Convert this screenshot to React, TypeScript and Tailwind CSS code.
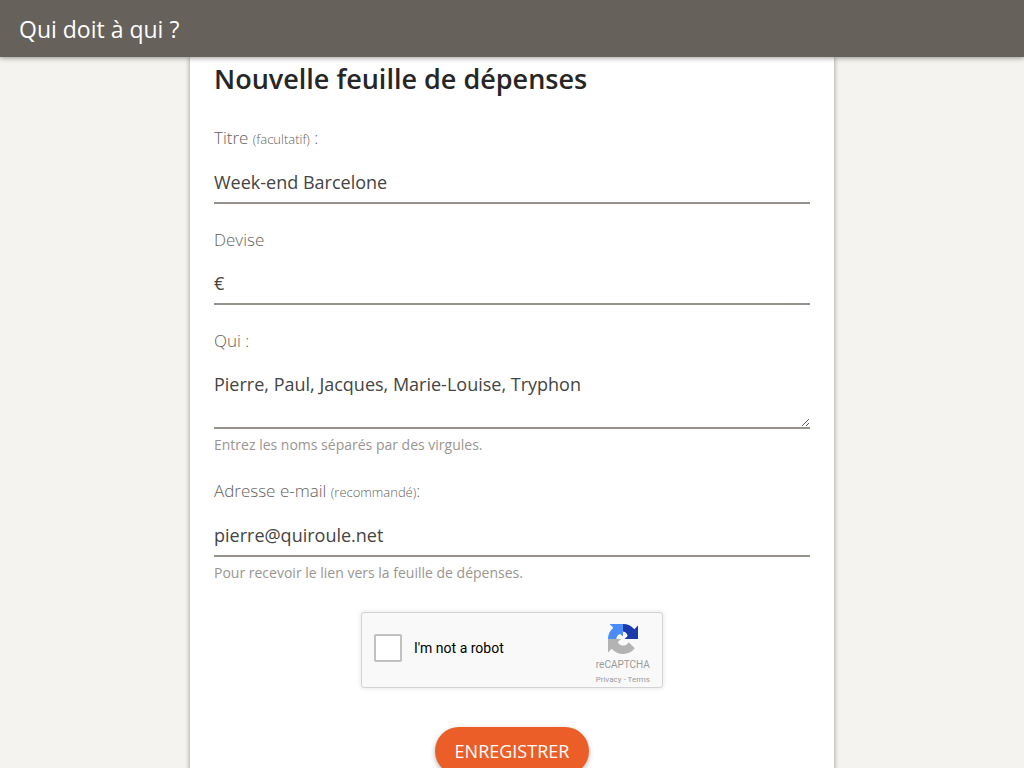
import { useState } from 'react'
import type { ReactNode } from 'react'

const inputCls =
  'block h-[43px] w-full border-b-2 border-[#98928d] bg-transparent text-[18px] text-[#444444] outline-none'

export default function App() {
  const [titre, setTitre] = useState('Week-end Barcelone')
  const [devise, setDevise] = useState('€')
  const [qui, setQui] = useState('Pierre, Paul, Jacques, Marie-Louise, Tryphon')
  const [email, setEmail] = useState('pierre@quiroule.net')

  return (
    <div className="min-h-screen bg-[#f4f3ef] font-['Open_Sans','Noto_Sans',sans-serif]">
      <header className="sticky top-0 z-10 flex h-[57px] items-center bg-[#66615b] px-[19px] shadow-[0_1px_5px_rgba(0,0,0,0.4)]">
        <span className="text-[23px] leading-8 text-white">Qui doit à qui ?</span>
      </header>

      <main className="mx-auto min-h-[calc(100vh-57px)] max-w-[644px] bg-white px-6 pb-4 shadow-[0_0_5px_rgba(0,0,0,0.4)]">
        <h1 className="pt-0.5 text-[27px] leading-10 font-semibold text-[#262626]">Nouvelle feuille de dépenses</h1>

        <form className="pt-[27px]" onSubmit={(e) => e.preventDefault()}>
          <div className="space-y-6">
            <Field id="titre" label={<>Titre <small className="text-[13px]">(facultatif)</small> :</>}>
              <input id="titre" value={titre} onChange={(e) => setTitre(e.target.value)} className={inputCls} />
            </Field>
            <Field id="devise" label="Devise">
              <input id="devise" value={devise} onChange={(e) => setDevise(e.target.value)} className={inputCls} />
            </Field>
            <Field id="qui" label="Qui :" hint="Entrez les noms séparés par des virgules.">
              <textarea
                id="qui"
                value={qui}
                onChange={(e) => setQui(e.target.value)}
                className="block h-[66px] w-full resize-y border-b-2 border-[#98928d] bg-transparent pt-[9px] text-[18px] leading-6 text-[#444444] outline-none"
              />
            </Field>
            <Field
              id="email"
              label={<>Adresse e-mail <small className="text-[13px]">(recommandé)</small>:</>}
              hint="Pour recevoir le lien vers la feuille de dépenses."
            >
              <input
                id="email"
                type="email"
                value={email}
                onChange={(e) => setEmail(e.target.value)}
                className={inputCls}
              />
            </Field>
          </div>

          <div className="mt-[29px] flex justify-center">
            <Captcha />
          </div>

          <div className="mt-[39px] flex justify-center">
            <button
              type="submit"
              className="h-12 rounded-full bg-[#eb5e28] px-5 text-[18px] text-white uppercase shadow-[0_2px_5px_rgba(0,0,0,0.3)]"
            >
              Enregistrer
            </button>
          </div>
        </form>
      </main>
    </div>
  )
}

function Field({
  id,
  label,
  hint,
  children,
}: {
  id: string
  label: ReactNode
  hint?: string
  children: ReactNode
}) {
  return (
    <div>
      <label htmlFor={id} className="mb-2.5 block text-[17px] leading-6 font-light text-[#66615b]">
        {label}
      </label>
      {children}
      {hint && <p className="mt-1.5 text-[14px] leading-5 text-[#9a9590]">{hint}</p>}
    </div>
  )
}

function Captcha() {
  return (
    <div className="flex h-[76px] w-[302px] items-start justify-between rounded-[3px] border border-[#d3d3d3] bg-[#f9f9f9] px-3 font-[Roboto,sans-serif] shadow-[0_0_4px_1px_rgba(0,0,0,0.08)]">
      <div className="flex items-center gap-3 pt-[21px]">
        <input
          id="robot"
          type="checkbox"
          className="size-7 appearance-none rounded-[2px] border-2 border-[#c1c1c1] bg-white checked:bg-[#4a90e2]"
        />
        <label htmlFor="robot" className="text-[14px] leading-4 text-black">
          I'm not a robot
        </label>
      </div>
      <div className="flex flex-col items-center pt-2.5 text-[#9b9b9b]">
        <CaptchaLogo />
        <span className="mt-1 text-[10px] leading-3">reCAPTCHA</span>
        <span className="mt-1 text-[8px] leading-[10px]">
          <a href="#privacy">Privacy</a> - <a href="#terms">Terms</a>
        </span>
      </div>
    </div>
  )
}

function CaptchaLogo() {
  return (
    <svg viewBox="0 0 64 64" className="size-8" aria-hidden="true">
      <path
        fill="#1c3aa9"
        d="M62 31.95V5.2l-7.4 7.4A30 30 0 0 0 32 2v14.8c1.3 0 2.6.5 3.8 1.1 3 1.5 4.5 4 5.5 7.9L35.2 31.95z"
      />
      <path
        fill="#4a8cf7"
        d="M31.9 2H5.2l7.4 7.4A30 30 0 0 0 2 31.95h16.5c.3-2.7 1-4.9 2.6-6.7 1.4-1.6 3-2.6 5.1-3.1L31.9 27z"
      />
      <path
        fill="#b3b3b3"
        d="M2 32v26.8l7.4-7.4A30 30 0 0 0 55.6 50.7L43.5 38.5c-1.3 2.4-3.2 4.2-5.5 5.4-2.5 1.2-5.4 1.5-8.1 1-4.2-.8-7-3.5-8.2-7L28 32z"
      />
    </svg>
  )
}
